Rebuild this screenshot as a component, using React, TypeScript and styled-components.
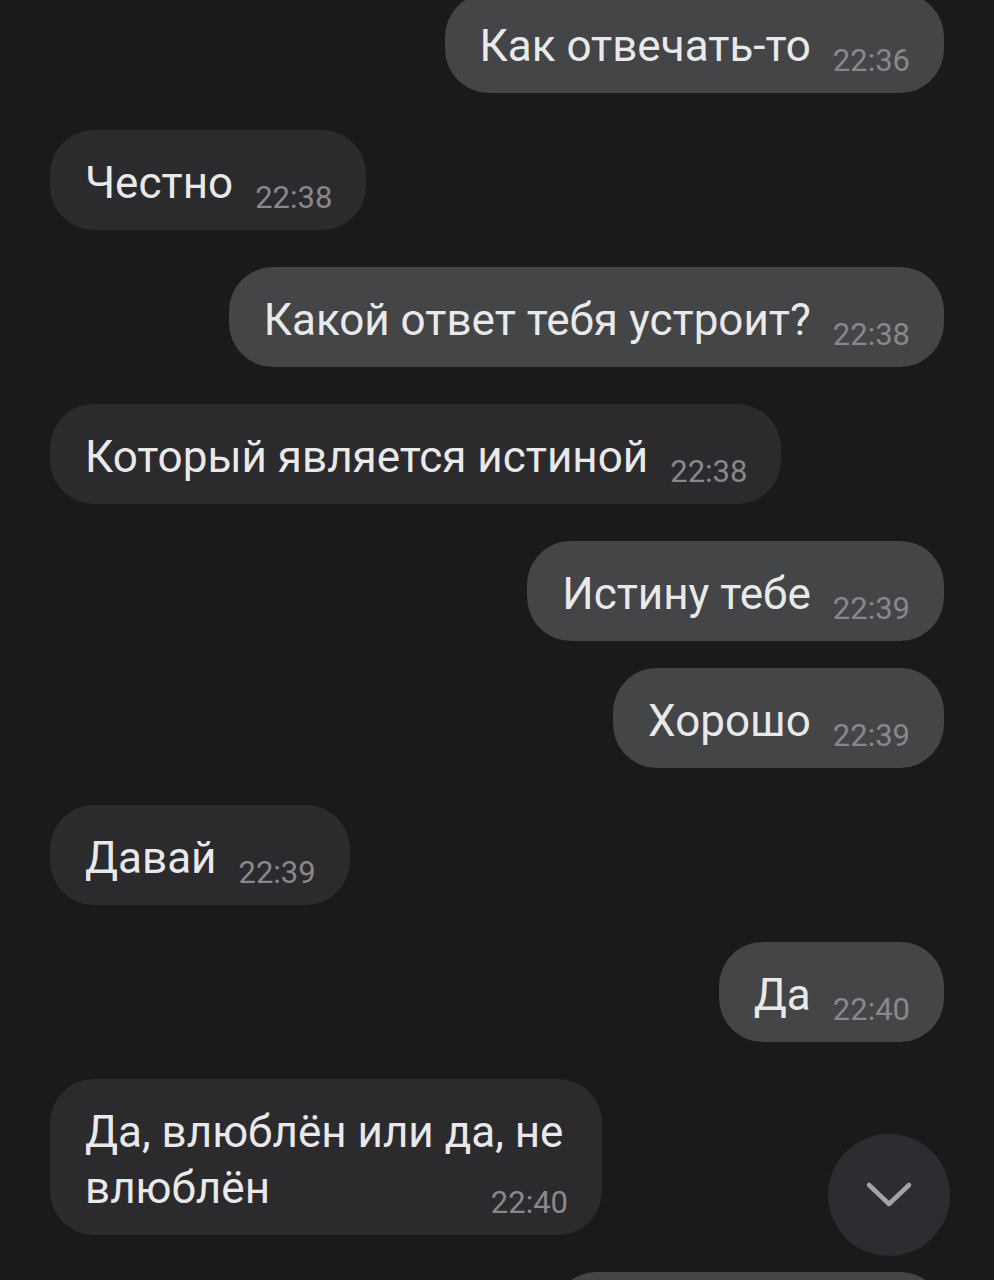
import React from 'react'
import styled, { createGlobalStyle } from 'styled-components'

const GlobalStyle = createGlobalStyle`
  html, body {
    margin: 0;
    padding: 0;
    background: #1a1a1b;
    overflow: hidden;
  }
  * {
    box-sizing: border-box;
  }
`

const Screen = styled.div`
  width: 994px;
  height: 1280px;
  overflow: hidden;
  background: #1a1a1b;
  font-family: Roboto, 'Noto Sans', sans-serif;
`

const MessageList = styled.div`
  display: flex;
  flex-direction: column;
  padding: 0 50px;
  margin-top: -7px;
`

const Bubble = styled.div<{ $out: boolean; $gap: number; $maxWidth?: number }>`
  display: flow-root;
  width: fit-content;
  max-width: ${(p) => p.$maxWidth ?? 780}px;
  align-self: ${(p) => (p.$out ? 'flex-end' : 'flex-start')};
  margin-top: ${(p) => p.$gap}px;
  padding: 25px 34px 19px 35px;
  border-radius: 44px;
  background: ${(p) => (p.$out ? '#444547' : '#2b2b2e')};
  color: #e9e9ea;
  font-size: 44px;
  line-height: 56px;
`

const Time = styled.span`
  float: right;
  margin-left: 22px;
  padding-top: 30px;
  font-size: 31px;
  line-height: 26px;
  color: #88888b;
`

const ScrollDown = styled.button`
  position: fixed;
  right: 44px;
  bottom: 24px;
  width: 122px;
  height: 122px;
  border: none;
  border-radius: 50%;
  background: #2c2d30;
  display: flex;
  align-items: center;
  justify-content: center;
  padding: 0;
`

type Message = { out: boolean; text: string; time: string; maxWidth?: number }

const messages: Message[] = [
  { out: true, text: 'Как отвечать-то', time: '22:36' },
  { out: false, text: 'Честно', time: '22:38' },
  { out: true, text: 'Какой ответ тебя устроит?', time: '22:38' },
  { out: false, text: 'Который является истиной', time: '22:38' },
  { out: true, text: 'Истину тебе', time: '22:39' },
  { out: true, text: 'Хорошо', time: '22:39' },
  { out: false, text: 'Давай', time: '22:39' },
  { out: true, text: 'Да', time: '22:40' },
  { out: false, text: 'Да, влюблён или да, не влюблён', time: '22:40', maxWidth: 552 },
  { out: true, text: 'Влюблён я', time: '22:41' },
]

export default function App() {
  return (
    <Screen>
      <GlobalStyle />
      <MessageList>
        {messages.map((m, i) => {
          const prev = messages[i - 1]
          const gap = i === 0 ? 0 : prev.out === m.out ? 27 : 37
          return (
            <Bubble key={i} $out={m.out} $gap={gap} $maxWidth={m.maxWidth}>
              {m.text}
              <Time>{m.time}</Time>
            </Bubble>
          )
        })}
      </MessageList>
      <ScrollDown aria-label="scroll down">
        <svg width="48" height="28" viewBox="0 0 48 28">
          <path
            d="M4 4 L24 23 L44 4"
            fill="none"
            stroke="#a2a4a8"
            strokeWidth="4.5"
            strokeLinecap="round"
            strokeLinejoin="round"
          />
        </svg>
      </ScrollDown>
    </Screen>
  )
}
